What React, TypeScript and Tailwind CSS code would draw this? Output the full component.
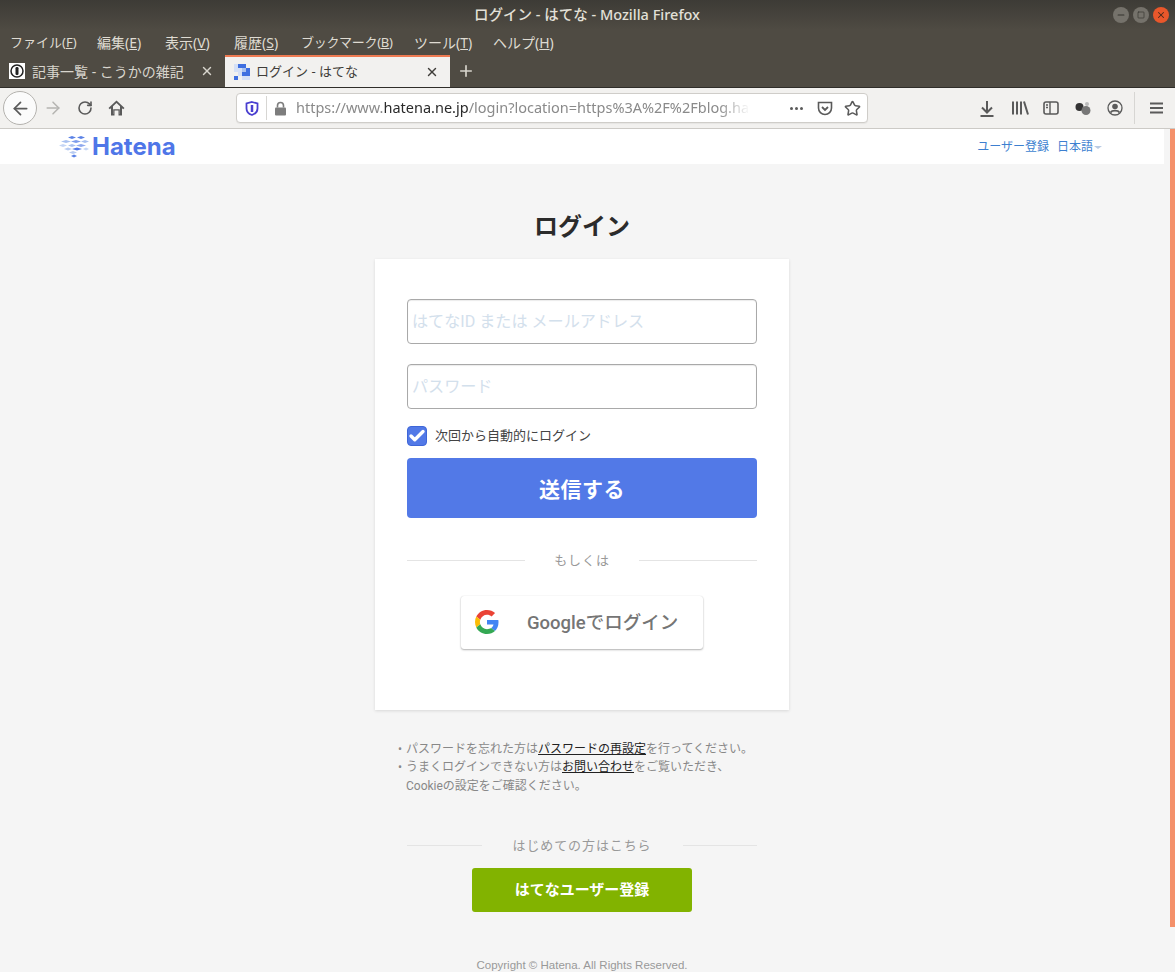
import { ArrowLeft, ArrowRight, RotateCw, Star, Minus, Square, X, Plus, Check } from "lucide-react";

const uiFont = "font-['Noto_Sans','Noto_Sans_CJK_JP',sans-serif]";

function MenuItem({ label, mnemonic, className }: { label: string; mnemonic: string; className: string }) {
  return (
    <span className={`whitespace-nowrap ${className}`}>
      {label}(<u>{mnemonic}</u>)
    </span>
  );
}

function HatenaFavicon() {
  const light = "#d5e0f6";
  const mid = "#a9c1ee";
  const blue = "#3f6fe0";
  const cells = [
    [0, 0, light], [4, 0, blue], [8, 0, blue],
    [0, 4, light], [4, 4, light], [8, 4, mid], [12, 4, blue],
    [4, 8, light], [8, 8, blue], [12, 8, blue],
    [0, 12, blue], [8, 12, light], [12, 12, light],
  ] as const;
  return (
    <svg width="16" height="16" viewBox="0 0 16 16">
      {cells.map(([x, y, c], i) => (
        <rect key={i} x={x} y={y} width="4" height="4" fill={c} />
      ))}
    </svg>
  );
}

function BlogFavicon() {
  return (
    <span className="flex h-4 w-4 items-center justify-center bg-white">
      <svg width="14" height="14" viewBox="0 0 14 14">
        <circle cx="7" cy="7" r="6" fill="none" stroke="#222" strokeWidth="1.5" />
        <rect x="5.5" y="3" width="3" height="8" rx="1.2" fill="#222" />
      </svg>
    </span>
  );
}

function HatenaMark() {
  const fish = [
    [13, 2.500, 4, "#5b82e6"],
    [22, 2.500, 4, "#5b82e6"],
    [7, 6.500, 5, "#a9c1f0"],
    [17, 6.500, 5, "#7d9ceb"],
    [26, 6.500, 4, "#a9c1f0"],
    [4, 10.500, 4, "#c5d6f5"],
    [13, 10.500, 4, "#a9c1f0"],
    [22, 10.500, 5, "#8fa9ee"],
    [9, 14, 4, "#b7cbf2"],
    [18, 14, 5, "#4f76e8"],
    [27, 14, 3, "#c5d6f5"],
    [14, 17.500, 4, "#b7cbf2"],
    [15, 21, 3, "#5b82e6"],
  ] as const;
  return (
    <svg width="31" height="24" viewBox="0 0 31 24">
      {fish.map(([x, y, r, c], i) => (
        <path key={i} d={`M${x - r} ${y}L${x} ${y - 1.5}L${x + r} ${y}L${x} ${y + 1.5}Z`} fill={c} />
      ))}
    </svg>
  );
}

function GoogleLogo() {
  return (
    <svg width="24" height="24" viewBox="0 0 48 48">
      <path fill="#EA4335" d="M24 9.5c3.500 0 6.700 1.200 9.200 3.600l6.900-6.900C35.900 2.400 30.400 0 24 0 14.600 0 6.500 5.400 2.600 13.200l8 6.200C12.500 13.700 17.800 9.500 24 9.500z" />
      <path fill="#4285F4" d="M47 24.500c0-1.600-.1-3.100-.4-4.500H24v9h13c-.6 3-2.300 5.500-4.800 7.200l7.700 6C44.400 38 47 31.800 47 24.500z" />
      <path fill="#FBBC05" d="M10.600 28.600c-.5-1.400-.8-3-.8-4.600s.3-3.200.8-4.600l-8-6.200C.9 16.500 0 20.100 0 24s.9 7.500 2.600 10.800l8-6.200z" />
      <path fill="#34A853" d="M24 48c6.500 0 11.900-2.100 15.900-5.800l-7.700-6c-2.200 1.400-4.900 2.300-8.200 2.300-6.200 0-11.500-4.200-13.400-9.900l-8 6.200C6.500 42.600 14.600 48 24 48z" />
    </svg>
  );
}

function Divider({ label, className }: { label: string; className: string }) {
  return (
    <div className={`flex w-[350px] items-center ${className}`}>
      <div className="h-px flex-1 bg-[#e4e4e4]" />
      <span className="text-[#999]">{label}</span>
      <div className="h-px flex-1 bg-[#e4e4e4]" />
    </div>
  );
}

function BrowserChrome() {
  return (
    <div className={uiFont}>
      <div className="flex h-[30px] items-center bg-gradient-to-b from-[#3d3b36] to-[#4f4b43] pl-[61px] text-[14.500px] font-medium text-[#e3e0d8]">
        <div className="flex-1 text-center">ログイン - はてな - Mozilla Firefox</div>
        <div className="mr-[6px] flex items-center gap-[4px]">
          <span className="flex h-4 w-4 items-center justify-center rounded-full bg-[#75726b] text-[#35332e]">
            <Minus size={10} strokeWidth={2.5} />
          </span>
          <span className="flex h-4 w-4 items-center justify-center rounded-full bg-[#75726b] text-[#35332e]">
            <Square size={8} strokeWidth={2} />
          </span>
          <span className="flex h-4 w-4 items-center justify-center rounded-full bg-[#e9572b] text-[#4a2a1c]">
            <X size={10} strokeWidth={2.5} />
          </span>
        </div>
      </div>

      <div className="flex h-[25px] items-center bg-[#4f4b43] pl-[10px] text-[13px] text-[#dfdbd2]">
        <MenuItem label="ファイル" mnemonic="F" className="w-[87px]" />
        <MenuItem label="編集" mnemonic="E" className="w-[68px] text-[14px]" />
        <MenuItem label="表示" mnemonic="V" className="w-[69px] text-[14px]" />
        <MenuItem label="履歴" mnemonic="S" className="w-[67px] text-[14px]" />
        <MenuItem label="ブックマーク" mnemonic="B" className="w-[113px] tracking-[-0.3px]" />
        <MenuItem label="ツール" mnemonic="T" className="w-[79px] text-[14px]" />
        <MenuItem label="ヘルプ" mnemonic="H" className="text-[14px]" />
      </div>

      <div className="flex h-[33px] items-stretch border-b border-[#2f2d29] bg-[#4f4b43] text-[13px]">
        <div className="flex w-[225px] items-center pl-[9px] pr-[11px] text-[#d8d5cd]">
          <BlogFavicon />
          <span className="ml-[7px] flex-1 text-[14px]">記事一覧 - こうかの雑記</span>
          <X size={14} strokeWidth={2.4} />
        </div>
        <div className="flex w-[225px] items-center border-t-2 border-[#ee7a52] bg-[#f2f1ef] pl-[9px] pr-[11px] text-[#3f3d39]">
          <HatenaFavicon />
          <span className="ml-[6px] flex-1">ログイン - はてな</span>
          <X size={14} strokeWidth={2.4} />
        </div>
        <div className="flex w-[32px] items-center justify-center text-[#d8d5cd]">
          <Plus size={18} strokeWidth={2.2} />
        </div>
      </div>

      <div className="flex h-[41px] items-center border-b border-[#cccac6] bg-[#f2f1ef] pl-[3px] text-[#5a5a5a]">
        <span className="flex h-[34px] w-[34px] items-center justify-center rounded-full border border-[#b4b2ae] bg-[#fbfbfb]">
          <ArrowLeft size={21} strokeWidth={2} />
        </span>
        <ArrowRight size={20} strokeWidth={1.8} className="ml-[6px] text-[#b5b4b1]" />
        <RotateCw size={16} strokeWidth={2.4} className="ml-[14px]" />
        <svg className="ml-[15px]" width="17" height="16" viewBox="0 0 17 16">
          <path d="M8.500 0.500 16.500 8 15.200 9.300 14 8.200V15.500H10.500V10.500H6.500V15.500H3V8.200L1.800 9.300 0.500 8Z" fill="#5a5a5a" />
          <path d="M8.500 3 12 6.300V14H11.800V9.300H5.200V14H5V6.300Z" fill="#f2f1ef" />
        </svg>

        <div className="ml-[111px] flex h-[30px] w-[632px] items-center rounded-[4px] border border-[#cfcdc9] bg-white pl-[8px] pr-[6px] shadow-[0_1px_1px_rgba(0,0,0,0.05)]">
          <svg width="14" height="15" viewBox="0 0 14 15">
            <path d="M7 1 12.500 2.500V7.500C12.500 10.500 10 13 7 14 4 13 1.500 10.500 1.500 7.500V2.500Z" fill="none" stroke="#4a3fd0" strokeWidth="1.8" />
            <path d="M7 4V11" stroke="#4a3fd0" strokeWidth="2.5" />
          </svg>
          <div className="ml-[7px] h-[24px] w-px bg-[#d7d6d3]" />
          <svg className="ml-[7px]" width="13" height="15" viewBox="0 0 13 15">
            <rect x="1" y="6.500" width="11" height="8" rx="1" fill="#7d7d7d" />
            <path d="M3.500 6.500V4.500a3 3 0 0 1 6 0v2" fill="none" stroke="#7d7d7d" strokeWidth="1.6" />
          </svg>
          <div className="ml-[9px] w-[454px] shrink-0 overflow-hidden whitespace-nowrap text-[14.500px] text-[#8a8a8a] [mask-image:linear-gradient(to_right,black_93%,transparent)]">
            https://www.<span className="text-[#2a2a2a]">hatena.ne.jp</span>/login?location=https%3A%2F%2Fblog.hat
          </div>
          <span className="ml-[40px] flex gap-[2px]">
            <i className="h-[3px] w-[3px] rounded-full bg-[#5a5a5a]" />
            <i className="h-[3px] w-[3px] rounded-full bg-[#5a5a5a]" />
            <i className="h-[3px] w-[3px] rounded-full bg-[#5a5a5a]" />
          </span>
          <svg className="ml-[14px]" width="16" height="15" viewBox="0 0 16 15">
            <path d="M1.500 1.500H14.500V7A6.500 6.500 0 0 1 1.500 7Z" fill="none" stroke="#5a5a5a" strokeWidth="1.6" />
            <path d="M5 6 8 9 11 6" fill="none" stroke="#5a5a5a" strokeWidth="1.8" />
          </svg>
          <Star size={17} strokeWidth={2.2} className="ml-[11px]" />
        </div>

        <svg className="ml-[111px]" width="16" height="17" viewBox="0 0 16 17">
          <path d="M8 1V12M3 7.500 8 12.500 13 7.500M1.500 16H14.500" fill="none" stroke="#5a5a5a" strokeWidth="2" />
        </svg>
        <svg className="ml-[16px]" width="18" height="16" viewBox="0 0 18 16">
          <path d="M2 1.500V14.500M6 1.500V14.500M10 1.500V14.500M13 1.500 17 14.500" fill="none" stroke="#5a5a5a" strokeWidth="2" />
        </svg>
        <svg className="ml-[14px]" width="16" height="14" viewBox="0 0 16 14">
          <rect x="1" y="1" width="14" height="12" rx="2" fill="none" stroke="#5a5a5a" strokeWidth="1.6" />
          <path d="M7 1V13M3 4H5M3 6.500H5" stroke="#5a5a5a" strokeWidth="1.4" />
        </svg>
        <svg className="ml-[16px]" width="16" height="15" viewBox="0 0 16 15">
          <circle cx="4.500" cy="6" r="4" fill="#333" />
          <circle cx="11" cy="9.500" r="4.500" fill="#777" />
          <circle cx="12" cy="3" r="2" fill="#bbb" />
        </svg>
        <svg className="ml-[16px]" width="16" height="16" viewBox="0 0 16 16">
          <circle cx="8" cy="8" r="7" fill="none" stroke="#5a5a5a" strokeWidth="1.3" />
          <circle cx="8" cy="6.500" r="2.800" fill="#5a5a5a" />
          <path d="M3.500 12.500C5 10 11 10 12.500 12.500" fill="none" stroke="#5a5a5a" strokeWidth="1.8" />
        </svg>
        <div className="ml-[11px] h-[32px] w-px bg-[#d7d6d3]" />
        <svg className="ml-[15px]" width="13" height="12" viewBox="0 0 13 12">
          <path d="M0 1.500H13M0 6H13M0 10.500H13" stroke="#5a5a5a" strokeWidth="1.8" />
        </svg>
      </div>
    </div>
  );
}

export default function App() {
  return (
    <div className="flex h-[972px] w-[1175px] flex-col overflow-hidden bg-[#f5f5f5]">
      <BrowserChrome />

      <div className="flex min-h-0 flex-1 font-['Roboto','Noto_Sans_CJK_JP',sans-serif]">
        <div className="w-[1164px]">
          <header className="flex h-[35px] items-center bg-white pl-[59px] pr-[62px]">
            <HatenaMark />
            <span className="ml-[2px] font-['Inter',sans-serif] text-[24px] font-bold text-[#4f76e8]">Hatena</span>
            <div className="ml-auto flex items-center text-[12px] text-[#3d7fd0]">
              <a>ユーザー登録</a>
              <a className="ml-2">日本語</a>
              <span className="ml-px mt-px h-0 w-0 border-x-[4px] border-t-[3px] border-x-transparent border-t-[#b9cbe4]" />
            </div>
          </header>

          <main className="flex flex-col items-center">
            <h1 className="mt-[45px] text-[24px] font-bold leading-9 text-[#2b2b2b]">ログイン</h1>

            <section className="mt-[14px] flex h-[451px] w-[414px] flex-col items-center bg-white px-8 pt-10 shadow-[0_1px_3px_rgba(0,0,0,0.12)]">
              <input
                placeholder="はてなID または メールアドレス"
                className="h-[45px] w-[350px] rounded-[4px] border border-[#a9a9a9] px-[4px] text-[16.100px] shadow-[inset_0_1px_1px_rgba(0,0,0,0.08)] placeholder:text-[#d3e0ec]"
              />
              <input
                placeholder="パスワード"
                className="mt-5 h-[45px] w-[350px] rounded-[4px] border border-[#a9a9a9] px-[4px] text-[16.100px] shadow-[inset_0_1px_1px_rgba(0,0,0,0.08)] placeholder:text-[#d3e0ec]"
              />
              <label className="mt-[17px] flex w-[350px] items-center text-[13px] text-[#444]">
                <span className="flex h-5 w-5 items-center justify-center rounded-[4px] border border-[#3e66d8] bg-[#5279e7] text-white">
                  <Check size={18} strokeWidth={4.5} />
                </span>
                <span className="ml-2">次回から自動的にログイン</span>
              </label>
              <button className="mt-3 h-[60px] w-[350px] rounded-[4px] bg-[#5279e7] pt-[5px] text-[21px] font-bold tracking-[0.5px] text-white">送信する</button>

              <Divider label="もしくは" className="mt-[33px] gap-[29px] text-[13px] tracking-[0.9px]" />

              <button className="mt-[25px] flex h-[53px] w-[242px] items-center rounded-[3px] bg-white pl-[14px] shadow-[0_1px_2px_rgba(0,0,0,0.3),0_0_1px_rgba(0,0,0,0.15)]">
                <GoogleLogo />
                <span className="ml-[28px] pt-[3px] text-[18.500px] font-medium text-[#757575]">Googleでログイン</span>
              </button>
            </section>

            <ul className="mt-[29.500px] w-[368px] text-[12px] leading-[18.500px] text-[#888]">
              <li className="whitespace-nowrap pl-2 before:absolute before:-ml-2 before:content-['•']">
                パスワードを忘れた方は<a className="text-[#222] underline">パスワードの再設定</a>を行ってください。
              </li>
              <li className="whitespace-nowrap pl-2 before:absolute before:-ml-2 before:content-['•']">
                うまくログインできない方は<a className="text-[#222] underline">お問い合わせ</a>をご覧いただき、
                <br />
                Cookieの設定をご確認ください。
              </li>
            </ul>

            <Divider label="はじめての方はこちら" className="mt-[40.500px] gap-[31px] text-[13px] tracking-[0.9px]" />

            <button className="mt-[13px] h-11 w-[220px] rounded-[3px] bg-[#82b300] text-[15px] font-bold text-white">はてなユーザー登録</button>

            <footer className="mt-[45px] font-['Liberation_Sans',sans-serif] text-[11.500px] text-[#999]">Copyright © Hatena. All Rights Reserved.</footer>
          </main>
        </div>
        <div className="ml-[6px] h-[798px] w-[5px] bg-[#f4906a]" />
      </div>
    </div>
  );
}
